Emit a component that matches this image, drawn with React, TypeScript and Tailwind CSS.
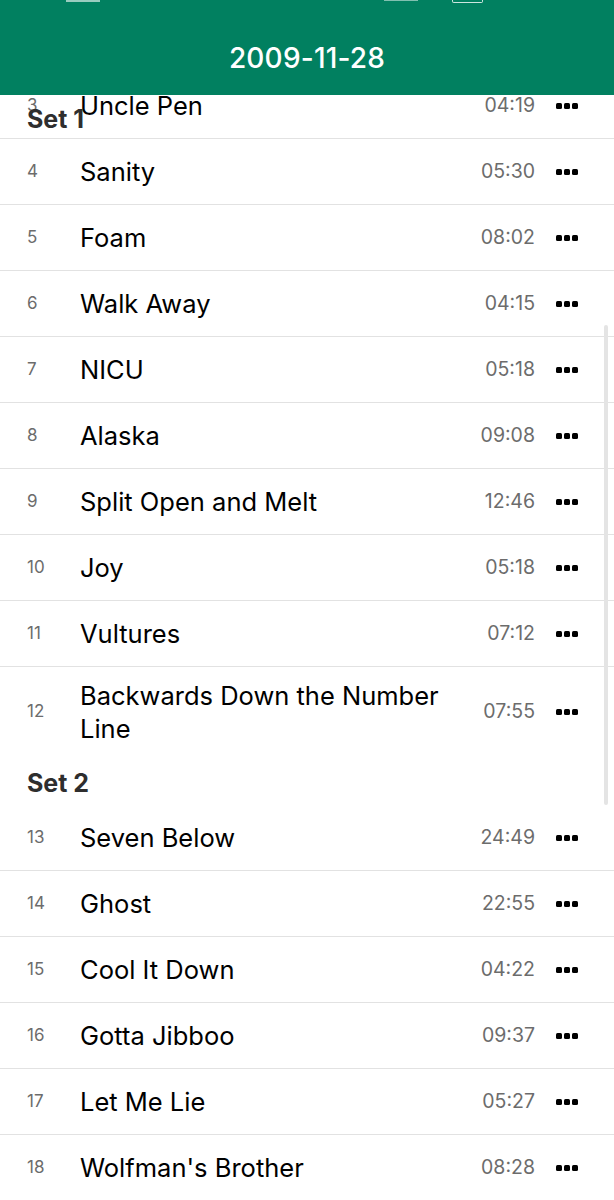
import React from 'react';

type Track = { n: number; title: string; time: string };

const set1: Track[] = [
  { n: 3, title: 'Uncle Pen', time: '04:19' },
  { n: 4, title: 'Sanity', time: '05:30' },
  { n: 5, title: 'Foam', time: '08:02' },
  { n: 6, title: 'Walk Away', time: '04:15' },
  { n: 7, title: 'NICU', time: '05:18' },
  { n: 8, title: 'Alaska', time: '09:08' },
  { n: 9, title: 'Split Open and Melt', time: '12:46' },
  { n: 10, title: 'Joy', time: '05:18' },
  { n: 11, title: 'Vultures', time: '07:12' },
  { n: 12, title: 'Backwards Down the Number Line', time: '07:55' },
];

const set2: Track[] = [
  { n: 13, title: 'Seven Below', time: '24:49' },
  { n: 14, title: 'Ghost', time: '22:55' },
  { n: 15, title: 'Cool It Down', time: '04:22' },
  { n: 16, title: 'Gotta Jibboo', time: '09:37' },
  { n: 17, title: 'Let Me Lie', time: '05:27' },
  { n: 18, title: "Wolfman's Brother", time: '08:28' },
];

function MoreDots() {
  return (
    <div className="flex items-center gap-[2px] w-[22px]">
      <span className="w-[6px] h-[6px] rounded-[1.5px] bg-black" />
      <span className="w-[6px] h-[6px] rounded-[1.5px] bg-black" />
      <span className="w-[6px] h-[6px] rounded-[1.5px] bg-black" />
    </div>
  );
}

function Row({ track, last }: { track: Track; last?: boolean }) {
  return (
    <div className={`flex items-center min-h-[66px] py-[12px] pl-[27px] pr-[36px] ${last ? '' : 'border-b border-[#e2e2e2]'}`}>
      <span className="w-[53px] shrink-0 text-[17px] text-[#6c6c6c]">{track.n}</span>
      <span className="flex-1 pr-[20px] text-[25.5px] leading-[33px] text-black">{track.title}</span>
      <span className="text-[19.5px] text-[#6c6c6c] mr-[21px]">{track.time}</span>
      <MoreDots />
    </div>
  );
}

function SetHeader({ label, offset }: { label: string; offset: string }) {
  return (
    <div className={`h-[48px] flex items-center pl-[27px] text-[25px] font-bold text-[#2e2e2e] ${offset}`}>{label}</div>
  );
}

export default function App() {
  return (
    <div className="w-[614px] h-[1200px] overflow-hidden bg-white flex flex-col" style={{ fontFamily: 'Inter, "Liberation Sans", sans-serif' }}>
      <header className="relative h-[95px] shrink-0 bg-[#018060] flex items-end justify-center pb-[16px] z-10">
        {/* status bar remnants */}
        <div className="absolute top-0 left-[66px] w-[34px] h-[2px] bg-white/60" />
        <div className="absolute top-0 left-[384px] w-[34px] h-[1px] bg-white/50" />
        <div className="absolute top-0 left-[452px] w-[31px] h-[3px] border-x border-b border-white/80 rounded-b-[2px]" />
        <h1 className="text-[28px] font-medium text-white tracking-[0.2px]">2009-11-28</h1>
      </header>
      <div className="relative flex-1 overflow-hidden">
        <div className="-mt-[22px]">
          {set1.map((t, i) => (
            <Row key={t.n} track={t} last={i === set1.length - 1} />
          ))}
          <SetHeader label="Set 2" offset="pt-[6px]" />
          {set2.map((t) => (
            <Row key={t.n} track={t} />
          ))}
        </div>
        <div className="absolute top-0 left-0 right-0">
          <SetHeader label="Set 1" offset="pt-[2px]" />
        </div>
        <div className="absolute right-[6px] top-[230px] w-[4px] h-[480px] rounded-full bg-[#e4e4e4]" />
      </div>
    </div>
  );
}
